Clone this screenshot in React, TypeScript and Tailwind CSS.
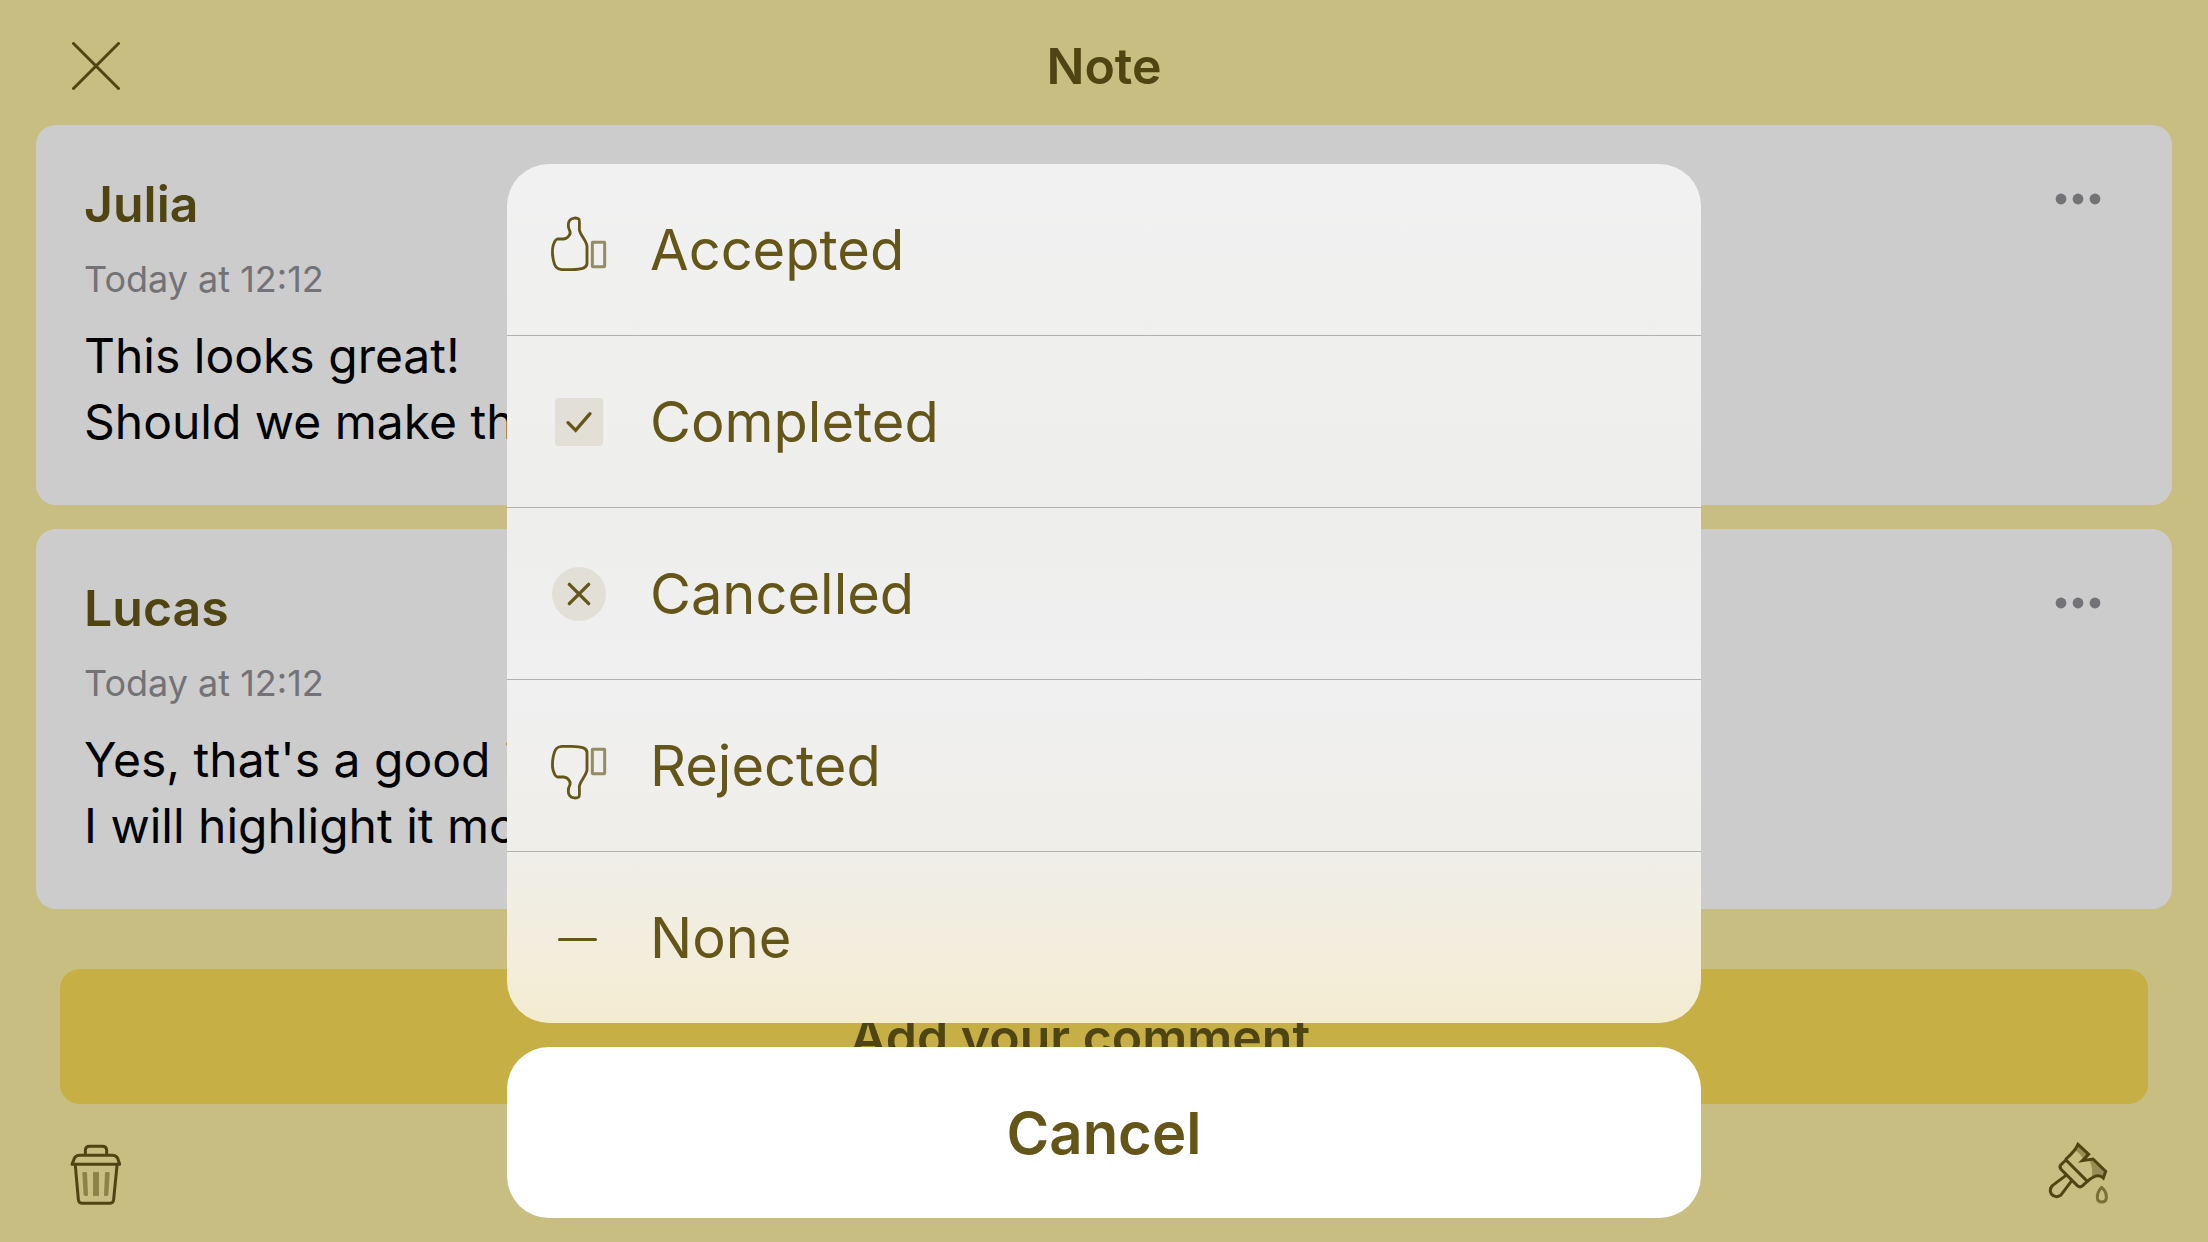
import type { ReactNode } from "react";

type Note = { author: string; date: string; lines: string[] };

const notes: Note[] = [
  {
    author: "Julia",
    date: "Today at 12:12",
    lines: ["This looks great!", "Should we make this bigger?"],
  },
  {
    author: "Lucas",
    date: "Today at 12:12",
    lines: ["Yes, that's a good idea.", "I will highlight it more."],
  },
];

function CloseIcon() {
  return (
    <svg viewBox="0 0 48 48" className="size-12" fill="none" stroke="currentColor" strokeWidth="3" strokeLinecap="round" aria-hidden="true">
      <path d="M1.5 1.5 46.500 46.500M46.500 1.500 1.500 46.500" />
    </svg>
  );
}

function DotsIcon() {
  return (
    <svg viewBox="0 0 46 12" className="h-3 w-[46px]" fill="currentColor" aria-hidden="true">
      <circle cx="6" cy="6" r="5.400" />
      <circle cx="23" cy="6" r="5.400" />
      <circle cx="40" cy="6" r="5.400" />
    </svg>
  );
}

function TrashIcon() {
  return (
    <svg viewBox="0 0 360 330" className="h-[110px] w-[120px]" fill="none" stroke="currentColor" strokeWidth="9" strokeLinejoin="round" strokeLinecap="round" aria-hidden="true">
      <path d="M136 103V92Q136 79 149 79H187Q200 79 200 92V103" />
      <path d="M96 133 103 115Q108 106 119 106H217Q228 106 233 115L239 133Z" />
      <path d="M106 137 115 238Q116 250 128 250H208Q220 250 221 238L231 137" />
      <g fill="currentColor" stroke="none" opacity="0.5">
        <path d="M127 160Q127 156 131 156H137Q141 156 141 160L144 224Q144 228 140 228H136Q132 228 131 224Z" />
        <rect x="159" y="156" width="18" height="72" rx="4" />
        <path d="M209 160Q209 156 205 156H199Q195 156 195 160L192 224Q192 228 196 228H200Q204 228 205 224Z" />
      </g>
    </svg>
  );
}

function BrushIcon() {
  return (
    <svg viewBox="0 0 360 330" className="h-[110px] w-[120px]" fill="none" stroke="currentColor" strokeWidth="9" strokeLinejoin="round" strokeLinecap="round" aria-hidden="true">
      <path d="M164 89 175 73 206 103 189 114Q180 100 164 89Z" fill="currentColor" stroke="none" opacity="0.4" />
      <path d="M208 119 220 117 257 154 250 173Q236 165 216 171 219 142 208 119Z" fill="currentColor" stroke="none" opacity="0.4" />
      <path d="M138 117Q167 91 174 73L206 103 187 122 219 117 257 154 250 174Q233 157 203 183" strokeLinejoin="miter" />
      <path d="M138 120 202 184 188 197Q180 204 172 197L124 149Q116 141 124 133Z" />
      <path d="M137 167 98 196Q86 208 94 222 106 236 122 226L153 185" />
      <path d="M245 202C236 212 231 224 232 234 234 250 257 250 259 234 260 224 254 210 245 202Z" opacity="0.65" />
    </svg>
  );
}

function ThumbUpIcon() {
  return (
    <svg viewBox="36 42 216 216" className="size-[72px]" fill="none" stroke="currentColor" strokeWidth="8.500" strokeLinejoin="round" aria-hidden="true">
      <path d="M82 117H101Q112 116 117 107 123 100 119 92C114 83 113 68 119 61 125 53 141 52 147 58Q149 61 148 88C149 104 170 122 171 139V190C171 204 158 208 124 209H95C80 208 74 200 70 180 65 156 68 136 74 125Q78 118 82 117Z" />
      <rect x="187" y="127" width="37" height="73" rx="1" strokeWidth="9" opacity="0.65" />
    </svg>
  );
}

function ThumbDownIcon() {
  return (
    <svg viewBox="36 15 216 216" className="size-[72px]" fill="none" stroke="currentColor" strokeWidth="8.500" strokeLinejoin="round" aria-hidden="true">
      <path d="M82 156H101Q112 157 117 166 123 173 119 181C114 190 113 205 119 212 125 220 141 221 147 215Q149 212 148 185C149 169 170 151 171 134V83C171 69 158 65 124 64H95C80 65 74 73 70 93 65 117 68 137 74 148Q78 155 82 156Z" />
      <rect x="187" y="73" width="37" height="73" rx="1" strokeWidth="9" opacity="0.65" />
    </svg>
  );
}

function CheckIcon() {
  return (
    <svg viewBox="36 18 216 216" className="size-[72px]" fill="none" stroke="currentColor" strokeWidth="10" strokeLinecap="round" aria-hidden="true">
      <rect x="75" y="54" width="144" height="144" rx="11" fill="#e1dfd6" stroke="none" />
      <path d="M114 128 137 151 180 101" />
    </svg>
  );
}

function CrossIcon() {
  return (
    <svg viewBox="36 24 216 216" className="size-[72px]" fill="none" stroke="currentColor" strokeWidth="10" strokeLinecap="round" aria-hidden="true">
      <circle cx="147" cy="132" r="81" fill="#e1dfd6" stroke="none" />
      <path d="M118 103 176 161M176 103 118 161" />
    </svg>
  );
}

function DashIcon() {
  return (
    <svg viewBox="0 0 72 72" className="size-[72px]" fill="none" stroke="currentColor" strokeWidth="3" strokeLinecap="round" aria-hidden="true">
      <path d="M17.500 37.500H53.500" />
    </svg>
  );
}

const statuses: { label: string; icon: ReactNode }[] = [
  { label: "Accepted", icon: <ThumbUpIcon /> },
  { label: "Completed", icon: <CheckIcon /> },
  { label: "Cancelled", icon: <CrossIcon /> },
  { label: "Rejected", icon: <ThumbDownIcon /> },
  { label: "None", icon: <DashIcon /> },
];

function NoteCard({ note }: { note: Note }) {
  return (
    <article className="rounded-[20px] bg-[#cccccc] px-12 pt-[46px] pb-[50px]">
      <div className="flex items-start justify-between">
        <h2 className="text-[50px] leading-[66px] font-semibold text-[#4f4512]">{note.author}</h2>
        <button type="button" aria-label="More options" className="flex h-14 w-[92px] items-center justify-center text-[#727277]">
          <DotsIcon />
        </button>
      </div>
      <p className="mt-[18px] text-[36px] leading-[48px] text-[#727277]">{note.date}</p>
      <p className="mt-5 text-[48px] leading-[66px] text-black">
        {note.lines.map((line) => (
          <span key={line} className="block">
            {line}
          </span>
        ))}
      </p>
    </article>
  );
}

export default function App() {
  return (
    <div className="min-h-screen bg-[#c8be82] font-['Inter',sans-serif]">
      <header className="grid h-[125px] grid-cols-[96px_1fr_96px] items-center px-12 pt-[6px] text-[#4f4512]">
        <button type="button" aria-label="Close" className="flex h-24 items-center justify-center">
          <CloseIcon />
        </button>
        <h1 className="text-center text-[50px] leading-[66px] font-semibold">Note</h1>
      </header>

      <main>
        <div className="flex flex-col gap-6 px-9">
          {notes.map((note) => (
            <NoteCard key={note.author} note={note} />
          ))}
        </div>
        <div className="mt-[60px] px-[60px]">
          <button type="button" className="h-[135px] w-full rounded-[20px] bg-[#c6af44] text-[50px] leading-[66px] font-semibold text-[#4f4512]">
            Add your comment…
          </button>
        </div>
      </main>

      <footer className="flex justify-between pt-4 pr-[68px] pl-10 text-[#4f4512]">
        <button type="button" aria-label="Delete note">
          <TrashIcon />
        </button>
        <button type="button" aria-label="Note style">
          <BrushIcon />
        </button>
      </footer>

      <div role="dialog" aria-modal="true" aria-label="Set status" className="fixed inset-0 flex flex-col items-center justify-end gap-6 pb-6 leading-[72px] text-[#635618]">
        <ul className="w-full max-w-[1194px] divide-y divide-[#b1b1ad] overflow-hidden rounded-[42px] bg-[linear-gradient(to_bottom,#f1f1f1_0%,#eeeeec_40%,#f0f0f1_60%,#efeee9_80%,#f3eddb_93%,#f3ecd0_100%)] text-[56px]">
          {statuses.map((status) => (
            <li key={status.label}>
              <button type="button" className="flex h-[171px] w-full items-center gap-9 pl-[35px] text-left">
                {status.icon}
                {status.label}
              </button>
            </li>
          ))}
        </ul>
        <button type="button" className="h-[171px] w-full max-w-[1194px] rounded-[42px] bg-white text-[58px] font-semibold">
          Cancel
        </button>
      </div>
    </div>
  );
}
